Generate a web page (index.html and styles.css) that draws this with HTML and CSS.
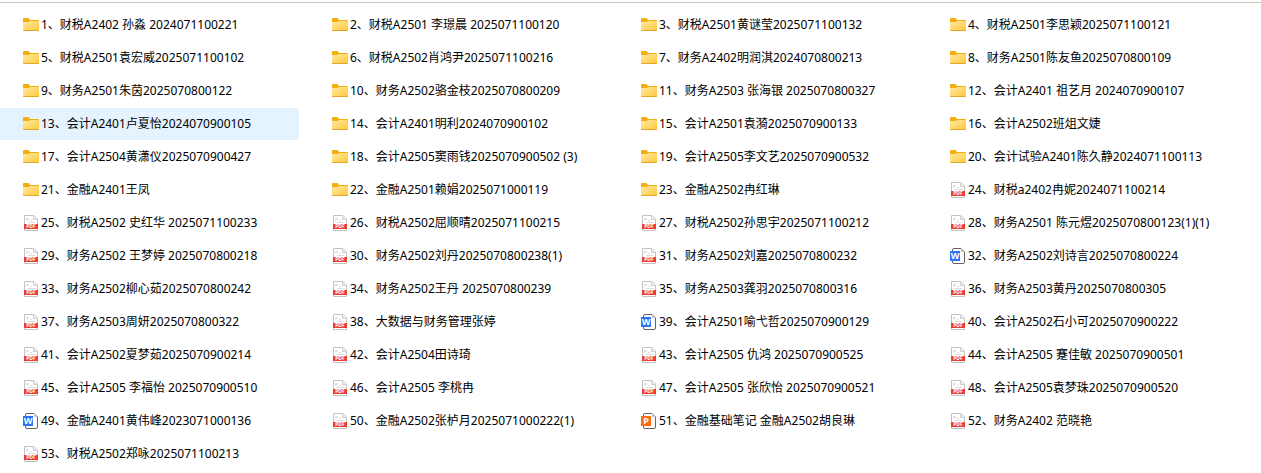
FILE: index.html
```html
<!DOCTYPE html>
<html lang="zh-CN">
<head>
    <meta charset="UTF-8">
    <meta name="viewport" content="width=device-width, initial-scale=1.0">
    <title>文件列表</title>
    <link rel="stylesheet" href="styles.css">
</head>
<body>
    <svg class="gradients" aria-hidden="true">
        <linearGradient id="folder-fill" x1="0" y1="0" x2="1" y2="1">
            <stop offset="0" stop-color="#ffe9a6"/>
            <stop offset="1" stop-color="#ffc937"/>
        </linearGradient>
    </svg>
    <svg class="sprite" aria-hidden="true">
        <symbol id="folder" viewBox="0 0 16 16">
            <path d="M0 2Q0 1 1 1H5Q5.6 1 6 1.5L7 3H15Q16 3 16 4V8H0Z" fill="#f2ae0c"/>
            <path d="M0 5H5.4Q6 5 6.5 4.5L7 4H15Q16 4 16 5V13Q16 14 15 14H1Q0 14 0 13Z" fill="url(#folder-fill)"/>
            <path d="M0 12.8Q0 14 1 14H15Q16 14 16 12.8Q15.7 13 15 13H1Q.3 13 0 12.8Z" fill="#e5a52a"/>
        </symbol>
        <symbol id="pdf" viewBox="0 0 16 16">
            <path d="M1.5.5H11L14.5 4V15.5H1.5Z" fill="#fff" stroke="#c2c2c2"/>
            <path d="M10.5.5V4.5H14.5" fill="#ececec" stroke="#cfcfcf"/>
            <path d="M3.5 5.5V3.5H5.5V4.5H3.5M7 5.5H9M5 7.5H12.5" fill="none" stroke="#dedede"/>
            <rect x="1" y="9" width="14" height="5" fill="#ee3a30"/>
            <text x="8" y="13" class="pdf-letter">PDF</text>
        </symbol>
        <symbol id="word" viewBox="0 0 16 16">
            <path d="M2.5 2Q2.5.5 4 .5H11L14.5 4V14Q14.5 15.5 13 15.5H4Q2.5 15.5 2.5 14Z" fill="#fff" stroke="#636363"/>
            <path d="M11 1V4H14Z" fill="#ccc"/>
            <rect x="0" y="3" width="10" height="10" fill="#2b74f5"/>
            <text x="5" y="11" class="letter">W</text>
        </symbol>
        <symbol id="ppt" viewBox="0 0 16 16">
            <path d="M2.5 2Q2.5.5 4 .5H11L14.5 4V14Q14.5 15.5 13 15.5H4Q2.5 15.5 2.5 14Z" fill="#fff" stroke="#636363"/>
            <path d="M11 1V4H14Z" fill="#ccc"/>
            <rect x="0" y="3" width="10" height="10" fill="#ff6a13"/>
            <text x="5" y="11" class="letter">P</text>
        </symbol>
    </svg>

    <ul class="file-list">
        <li class="file"><svg class="icon"><use href="#folder"/></svg><span>1、财税A2402 孙淼 2024071100221</span></li>
        <li class="file"><svg class="icon"><use href="#folder"/></svg><span>2、财税A2501 李璟晨 2025071100120</span></li>
        <li class="file"><svg class="icon"><use href="#folder"/></svg><span>3、财税A2501黄谜莹2025071100132</span></li>
        <li class="file"><svg class="icon"><use href="#folder"/></svg><span>4、财税A2501李思颖2025071100121</span></li>

        <li class="file"><svg class="icon"><use href="#folder"/></svg><span>5、财税A2501袁宏威2025071100102</span></li>
        <li class="file"><svg class="icon"><use href="#folder"/></svg><span>6、财税A2502肖鸿尹2025071100216</span></li>
        <li class="file"><svg class="icon"><use href="#folder"/></svg><span>7、财务A2402明润淇2024070800213</span></li>
        <li class="file"><svg class="icon"><use href="#folder"/></svg><span>8、财务A2501陈友鱼2025070800109</span></li>

        <li class="file"><svg class="icon"><use href="#folder"/></svg><span>9、财务A2501朱茵2025070800122</span></li>
        <li class="file"><svg class="icon"><use href="#folder"/></svg><span>10、财务A2502骆金枝2025070800209</span></li>
        <li class="file"><svg class="icon"><use href="#folder"/></svg><span>11、财务A2503 张海银 2025070800327</span></li>
        <li class="file"><svg class="icon"><use href="#folder"/></svg><span>12、会计A2401 祖艺月 2024070900107</span></li>

        <li class="file active"><svg class="icon"><use href="#folder"/></svg><span>13、会计A2401卢夏怡2024070900105</span></li>
        <li class="file"><svg class="icon"><use href="#folder"/></svg><span>14、会计A2401明利2024070900102</span></li>
        <li class="file"><svg class="icon"><use href="#folder"/></svg><span>15、会计A2501袁漪2025070900133</span></li>
        <li class="file"><svg class="icon"><use href="#folder"/></svg><span>16、会计A2502班俎文婕</span></li>

        <li class="file"><svg class="icon"><use href="#folder"/></svg><span>17、会计A2504黄潇仪2025070900427</span></li>
        <li class="file"><svg class="icon"><use href="#folder"/></svg><span>18、会计A2505窦雨钱2025070900502 (3)</span></li>
        <li class="file"><svg class="icon"><use href="#folder"/></svg><span>19、会计A2505李文艺2025070900532</span></li>
        <li class="file"><svg class="icon"><use href="#folder"/></svg><span>20、会计试验A2401陈久静2024071100113</span></li>

        <li class="file"><svg class="icon"><use href="#folder"/></svg><span>21、金融A2401王凤</span></li>
        <li class="file"><svg class="icon"><use href="#folder"/></svg><span>22、金融A2501赖娟2025071000119</span></li>
        <li class="file"><svg class="icon"><use href="#folder"/></svg><span>23、金融A2502冉红琳</span></li>
        <li class="file"><svg class="icon"><use href="#pdf"/></svg><span>24、财税a2402冉妮2024071100214</span></li>

        <li class="file"><svg class="icon"><use href="#pdf"/></svg><span>25、财税A2502 史红华 2025071100233</span></li>
        <li class="file"><svg class="icon"><use href="#pdf"/></svg><span>26、财税A2502屈顺晴2025071100215</span></li>
        <li class="file"><svg class="icon"><use href="#pdf"/></svg><span>27、财税A2502孙思宇2025071100212</span></li>
        <li class="file"><svg class="icon"><use href="#pdf"/></svg><span>28、财务A2501 陈元煜2025070800123(1)(1)</span></li>

        <li class="file"><svg class="icon"><use href="#pdf"/></svg><span>29、财务A2502 王梦婷 2025070800218</span></li>
        <li class="file"><svg class="icon"><use href="#pdf"/></svg><span>30、财务A2502刘丹2025070800238(1)</span></li>
        <li class="file"><svg class="icon"><use href="#pdf"/></svg><span>31、财务A2502刘嘉2025070800232</span></li>
        <li class="file"><svg class="icon"><use href="#word"/></svg><span>32、财务A2502刘诗言2025070800224</span></li>

        <li class="file"><svg class="icon"><use href="#pdf"/></svg><span>33、财务A2502柳心茹2025070800242</span></li>
        <li class="file"><svg class="icon"><use href="#pdf"/></svg><span>34、财务A2502王丹 2025070800239</span></li>
        <li class="file"><svg class="icon"><use href="#pdf"/></svg><span>35、财务A2503龚羽2025070800316</span></li>
        <li class="file"><svg class="icon"><use href="#pdf"/></svg><span>36、财务A2503黄丹2025070800305</span></li>

        <li class="file"><svg class="icon"><use href="#pdf"/></svg><span>37、财务A2503周妍2025070800322</span></li>
        <li class="file"><svg class="icon"><use href="#pdf"/></svg><span>38、大数据与财务管理张婷</span></li>
        <li class="file"><svg class="icon"><use href="#word"/></svg><span>39、会计A2501喻弋哲2025070900129</span></li>
        <li class="file"><svg class="icon"><use href="#pdf"/></svg><span>40、会计A2502石小可2025070900222</span></li>

        <li class="file"><svg class="icon"><use href="#pdf"/></svg><span>41、会计A2502夏梦茹2025070900214</span></li>
        <li class="file"><svg class="icon"><use href="#pdf"/></svg><span>42、会计A2504田诗琦</span></li>
        <li class="file"><svg class="icon"><use href="#pdf"/></svg><span>43、会计A2505 仇鸿 2025070900525</span></li>
        <li class="file"><svg class="icon"><use href="#pdf"/></svg><span>44、会计A2505 蹇佳敏 2025070900501</span></li>

        <li class="file"><svg class="icon"><use href="#pdf"/></svg><span>45、会计A2505 李福怡 2025070900510</span></li>
        <li class="file"><svg class="icon"><use href="#pdf"/></svg><span>46、会计A2505 李桃冉</span></li>
        <li class="file"><svg class="icon"><use href="#pdf"/></svg><span>47、会计A2505 张欣怡 2025070900521</span></li>
        <li class="file"><svg class="icon"><use href="#pdf"/></svg><span>48、会计A2505袁梦珠2025070900520</span></li>

        <li class="file"><svg class="icon"><use href="#word"/></svg><span>49、金融A2401黄伟峰2023071000136</span></li>
        <li class="file"><svg class="icon"><use href="#pdf"/></svg><span>50、金融A2502张栌月2025071000222(1)</span></li>
        <li class="file"><svg class="icon"><use href="#ppt"/></svg><span>51、金融基础笔记 金融A2502胡良琳</span></li>
        <li class="file"><svg class="icon"><use href="#pdf"/></svg><span>52、财务A2402 范晓艳</span></li>

        <li class="file"><svg class="icon"><use href="#pdf"/></svg><span>53、财税A2502郑咏2025071100213</span></li>
    </ul>
</body>
</html>
```
FILE: styles.css
```css
body {
    margin: 0;
    padding-top: 2px;
    background-color: #fff;
    color: #000;
    font-family: "Noto Sans", "Noto Sans CJK SC", sans-serif;
    font-size: 12px;
    line-height: 16px;
}
.sprite {
    display: none;
}
.gradients {
    position: absolute;
    width: 0;
    height: 0;
}
.file-list {
    display: grid;
    grid-template-columns: repeat(auto-fill, 299px);
    gap: 1px 10px;
    margin: 0;
    padding: 6px 0 0;
    border-top: 1px solid #c8c8be;
    list-style: none;
}
.file {
    display: flex;
    align-items: center;
    gap: 2px;
    height: 32px;
    padding-left: 23px;
    box-sizing: border-box;
    border-radius: 0 2px 2px 0;
    white-space: nowrap;
}
.file span {
    padding-bottom: 1px;
}
.file.active,
.file:hover {
    background-color: #e5f3ff;
}
.icon {
    flex: none;
    width: 16px;
    height: 16px;
}
.letter {
    fill: #fff;
    font-size: 9px;
    font-weight: bold;
    text-anchor: middle;
}
.pdf-letter {
    fill: #fff;
    font-size: 5px;
    font-weight: bold;
    text-anchor: middle;
}
```
